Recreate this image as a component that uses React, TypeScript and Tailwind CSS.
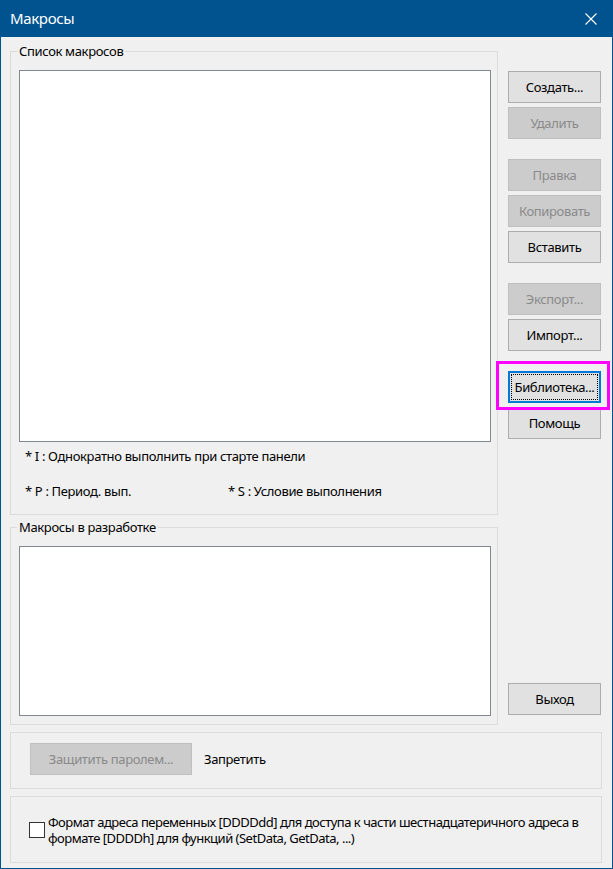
import React from "react";

const font = { fontFamily: '"Noto Sans", "Open Sans", sans-serif' };

function Btn({
  label,
  disabled,
  focused,
  className = "",
}: {
  label: string;
  disabled?: boolean;
  focused?: boolean;
  className?: string;
}) {
  if (focused) {
    return (
      <div
        className={
          "h-[32px] w-[93px] border-2 border-[#0078d7] bg-[#e1e1e1] p-[1px] " + className
        }
      >
        <div className="flex h-full w-full items-center justify-center border border-dotted border-black text-[13px] leading-none text-black">
          {label}
        </div>
      </div>
    );
  }
  return (
    <div
      className={
        "flex h-[32px] w-[93px] items-center justify-center border text-[13px] leading-none " +
        (disabled
          ? "border-[#bfbfbf] bg-[#cccccc] text-[#8a8a8a] "
          : "border-[#adadad] bg-[#e1e1e1] text-black ") +
        className
      }
    >
      {label}
    </div>
  );
}

export default function App() {
  return (
    <div
      className="flex h-[869px] w-[613px] flex-col border-x border-b border-[#00538f] bg-[#f0f0f0] tracking-[-0.35px] text-black"
      style={font}
    >
      {/* Title bar */}
      <div className="flex h-[37px] shrink-0 items-center justify-between bg-[#00538f] pl-[9px] pr-[15px]">
        <span className="text-[15px] text-white">Макросы</span>
        <svg width="12" height="12" viewBox="0 0 12 12">
          <path d="M0.5 0.5 L11.5 11.5 M11.5 0.5 L0.5 11.5" stroke="white" strokeWidth="1.1" />
        </svg>
      </div>

      {/* Body */}
      <div className="flex flex-col pl-[9px] pr-[10px] pt-[6px]">
        <div className="flex gap-[10px]">
          {/* Left column */}
          <div className="flex w-[488px] flex-col">
            <fieldset className="m-0 border border-[#dcdcdc] p-0">
              <legend className="ml-[6px] px-[2px] text-[13px] leading-[16px]">
                Список макросов
              </legend>
              <div className="pb-[15px] pl-[8px] pr-[6px]">
                <div className="mt-[11px] h-[372px] border border-[#828790] bg-white" />
                <div className="mt-[6px] pl-[6px] text-[13px] leading-[16px]">
                  * I : Однократно выполнить при старте панели
                </div>
                <div className="mt-[19px] flex pl-[6px] text-[13px] leading-[16px]">
                  <span className="w-[203px]">* P : Период. вып.</span>
                  <span>* S : Условие выполнения</span>
                </div>
              </div>
            </fieldset>

            <fieldset className="m-0 mt-[4px] border border-[#dcdcdc] p-0">
              <legend className="ml-[6px] px-[2px] text-[13px] leading-[16px]">
                Макросы в разработке
              </legend>
              <div className="pb-[8px] pl-[8px] pr-[6px]">
                <div className="mt-[11px] h-[170px] border border-[#828790] bg-white" />
              </div>
            </fieldset>
          </div>

          {/* Right column of buttons */}
          <div className="flex w-[93px] flex-col pb-[10px] pt-[28px]">
            <Btn label="Создать..." />
            <Btn label="Удалить" disabled className="mt-[4px]" />
            <Btn label="Правка" disabled className="mt-[20px]" />
            <Btn label="Копировать" disabled className="mt-[4px]" />
            <Btn label="Вставить" className="mt-[4px]" />
            <Btn label="Экспорт..." disabled className="mt-[20px]" />
            <Btn label="Импорт..." className="mt-[4px]" />
            <div className="relative mt-[20px]">
              <Btn label="Библиотека..." focused />
              <div className="pointer-events-none absolute left-[-12px] top-[-10px] h-[49px] w-[114px] border-[3px] border-[#ff00ff]" />
            </div>
            <Btn label="Помощь" className="mt-[4px]" />
            <Btn label="Выход" className="mt-auto" />
          </div>
        </div>

        {/* Password group */}
        <div className="mt-[7px] flex items-center border border-[#dcdcdc] pb-[13px] pl-[19px] pt-[10px]">
          <div className="flex h-[32px] w-[162px] items-center justify-center border border-[#bfbfbf] bg-[#cccccc] text-[13px] leading-none text-[#8a8a8a]">
            Защитить паролем...
          </div>
          <span className="ml-[12px] text-[13px] leading-none">Запретить</span>
        </div>

        {/* Checkbox group */}
        <div className="mt-[7px] flex h-[67px] items-center border border-[#dcdcdc] pl-[18px]">
          <div className="h-[16px] w-[16px] shrink-0 border border-[#333333] bg-white" />
          <div className="ml-[3px] whitespace-nowrap text-[13px] leading-[16px] tracking-[-0.5px]">
            Формат адреса переменных [DDDDdd] для доступа к части шестнадцатеричного адреса в
            <br />
            формате [DDDDh] для функций (SetData, GetData, ...)
          </div>
        </div>
      </div>
    </div>
  );
}
